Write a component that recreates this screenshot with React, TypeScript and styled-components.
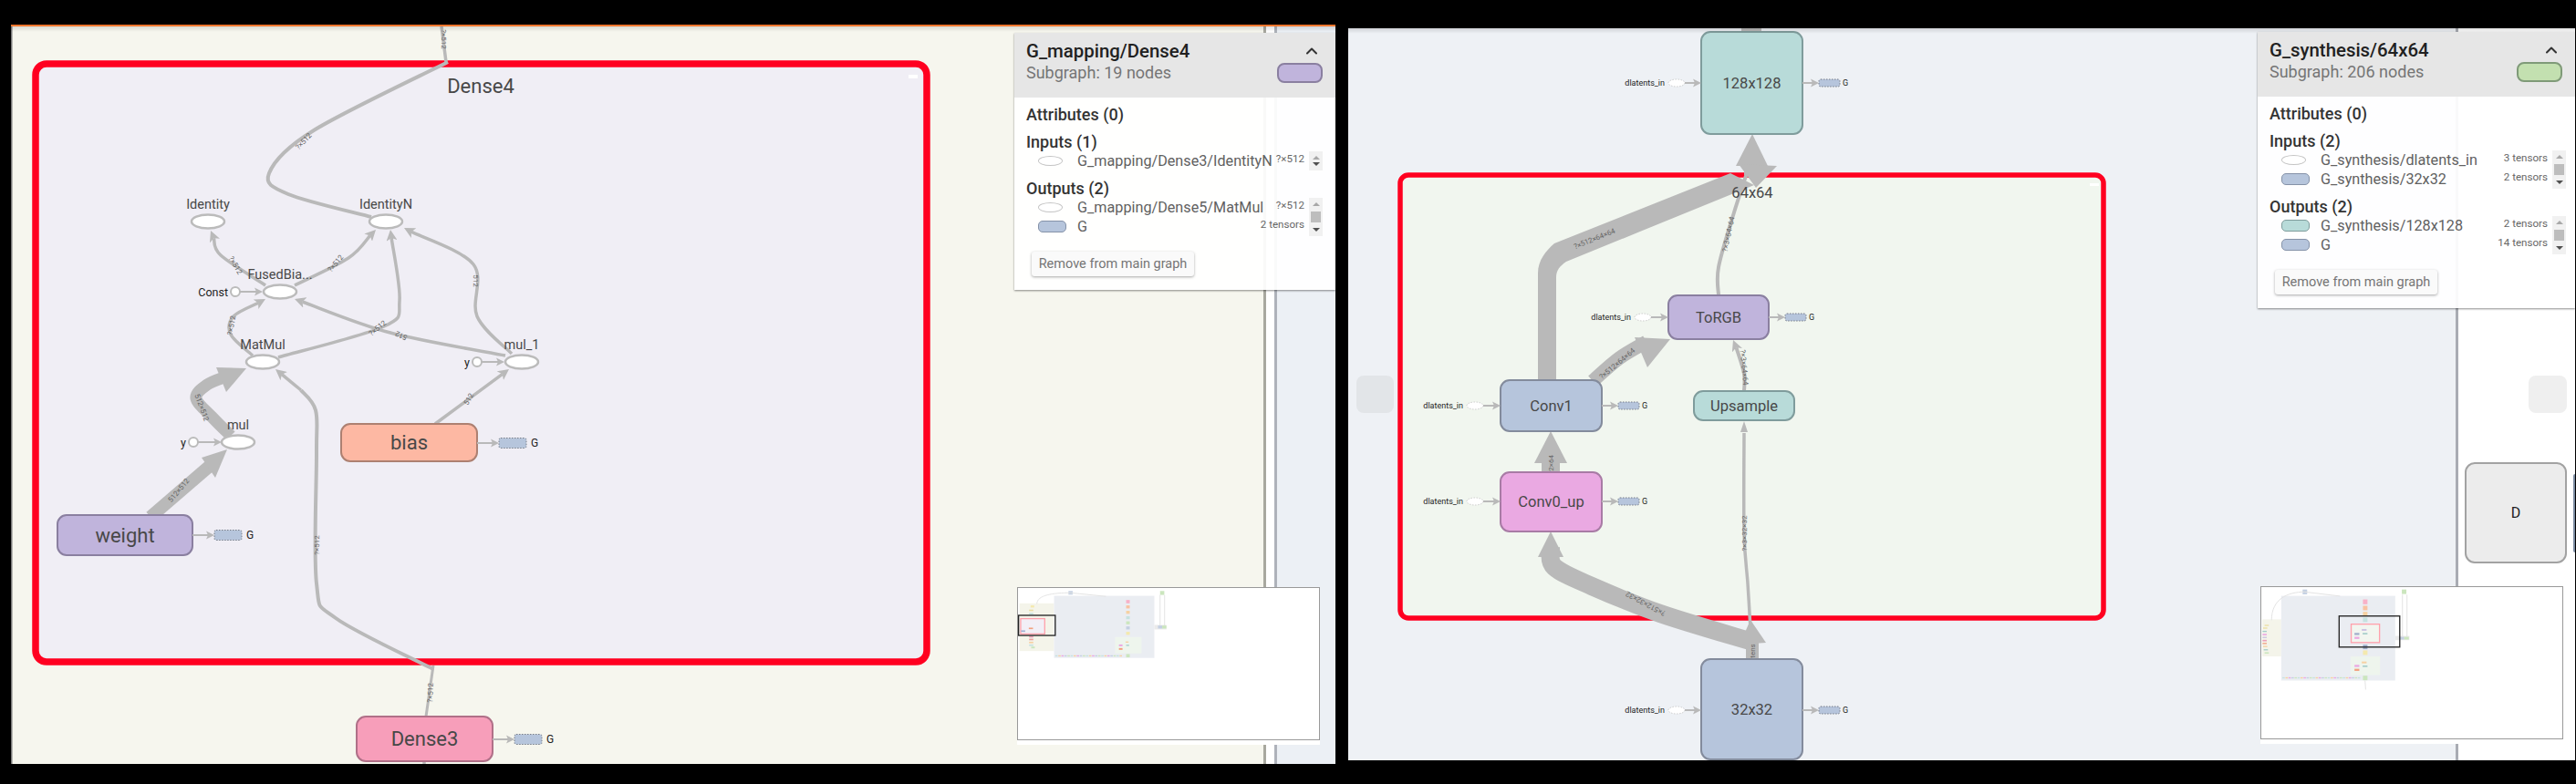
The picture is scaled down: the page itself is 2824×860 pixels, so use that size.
import * as React from "react";
import styled, { createGlobalStyle } from "styled-components";
import { ChevronUp } from "lucide-react";

const GlobalStyle = createGlobalStyle`
  html, body {
    margin: 0;
    width: 2824px;
    height: 860px;
    overflow: hidden;
    background: #000;
    font-family: Roboto, "Liberation Sans", sans-serif;
  }
`;

const Page = styled.div`
  display: flex;
  align-items: flex-start;
  gap: 14px;
  height: 860px;
  padding-left: 12px;
  box-sizing: border-box;
`;

const Panel = styled.section<{ $top: number; $width: number; $height: number; $accent?: string }>`
  position: relative;
  overflow: hidden;
  flex: none;
  margin-top: ${p => p.$top}px;
  width: ${p => p.$width}px;
  height: ${p => p.$height}px;

  &::after {
    content: "";
    position: absolute;
    left: 0;
    right: 0;
    top: 0;
    height: 6px;
    border-top: ${p => (p.$accent ? `2px solid ${p.$accent}` : "none")};
    background: linear-gradient(rgba(0, 0, 0, 0.12), rgba(0, 0, 0, 0));
  }
`;

const Graph = styled.svg`
  position: absolute;
  inset: 0;
  display: block;
  font-family: Roboto, "Liberation Sans", sans-serif;
`;

const Edge = styled.path<{ $width?: number }>`
  fill: none;
  stroke: #b9b9b9;
  stroke-width: ${p => p.$width ?? 3.5}px;
`;

const Band = styled.path`
  fill: #b9b9b9;
`;

const Head = styled.polygon`
  fill: #b9b9b9;
`;

const EdgeLabel = styled.text`
  font-size: 8px;
  fill: #666;
  text-anchor: middle;
  dominant-baseline: central;
`;

const GroupBox = styled.rect<{ $fill: string; $border: number }>`
  fill: ${p => p.$fill};
  stroke: #ff0020;
  stroke-width: ${p => p.$border}px;
`;

const Meta = styled.rect<{ $fill: string; $stroke: string }>`
  fill: ${p => p.$fill};
  stroke: ${p => p.$stroke};
  stroke-width: 2px;
`;

const Op = styled.ellipse`
  fill: #fff;
  stroke: #bbb;
  stroke-width: 2.5px;
`;

const AuxOval = styled.ellipse<{ $dashed?: boolean }>`
  fill: #fff;
  stroke: ${p => (p.$dashed ? "#ccc" : "#bbb")};
  stroke-width: ${p => (p.$dashed ? 1 : 2)}px;
  stroke-dasharray: ${p => (p.$dashed ? "1.5 1.5" : "none")};
`;

const AuxBox = styled.rect`
  fill: #b6c5dc;
  stroke: #777d88;
  stroke-width: 1px;
  stroke-dasharray: 1.5 1.5;
`;

const Label = styled.text<{ $size: number; $end?: boolean; $dark?: boolean }>`
  font-size: ${p => p.$size}px;
  fill: ${p => (p.$dark ? "#222" : "#484848")};
  text-anchor: ${p => (p.$end ? "end" : "middle")};
  dominant-baseline: central;
`;

const Card = styled.aside<{ $top: number; $width: number }>`
  position: absolute;
  z-index: 2;
  top: ${p => p.$top}px;
  right: 0;
  width: ${p => p.$width}px;
  background: rgba(255, 255, 255, 0.93);
  box-shadow: 0 1px 2px rgba(0, 0, 0, 0.45);
`;

const CardHeader = styled.header`
  display: flex;
  justify-content: space-between;
  height: 71px;
  padding: 8px 14px 0 13px;
  box-sizing: border-box;
  background: rgba(229, 229, 229, 0.97);
`;

const Titles = styled.div`
  display: flex;
  flex-direction: column;
  gap: 2px;
`;

const Title = styled.div`
  font-size: 20.4px;
  line-height: 24px;
  font-weight: 500;
  color: #212121;
  white-space: nowrap;
`;

const Subtitle = styled.div`
  font-size: 18px;
  line-height: 20px;
  color: #757575;
  white-space: nowrap;
`;

const HeaderSide = styled.div`
  display: flex;
  flex-direction: column;
  align-items: flex-end;
  margin-top: 2px;
`;

const Chevron = styled(ChevronUp)`
  display: block;
  margin-right: 2px;
  color: #333;
`;

const Swatch = styled.div<{ $fill: string; $stroke: string }>`
  width: 50px;
  height: 22px;
  margin-top: 3px;
  box-sizing: border-box;
  border-radius: 8px;
  background: ${p => p.$fill};
  border: 2px solid ${p => p.$stroke};
`;

const CardBody = styled.div<{ $right: number }>`
  padding: 9px ${p => p.$right}px 15px 13px;
`;

const SectionTitle = styled.div`
  font-size: 18px;
  line-height: 20px;
  font-weight: 500;
  color: #333;
  margin-bottom: 10px;
`;

const ListTitle = styled(SectionTitle)`
  margin-bottom: 0;
`;

const NodeList = styled.div`
  display: flex;
  margin-bottom: 10px;
`;

const Rows = styled.div`
  flex: 1;
  min-width: 0;
`;

const Row = styled.div`
  display: flex;
  align-items: center;
  height: 21px;
  padding-left: 13px;
`;

const RowShape = styled.div`
  flex: none;
  width: 43px;
`;

const Oval = styled.div`
  width: 27px;
  height: 11px;
  box-sizing: border-box;
  border: 1.5px solid #c4c4c4;
  border-radius: 50%;
  background: #fff;
`;

const Pill = styled.div<{ $fill: string; $stroke: string }>`
  width: 31px;
  height: 13px;
  box-sizing: border-box;
  border: 1.5px solid ${p => p.$stroke};
  border-radius: 5px;
  background: ${p => p.$fill};
`;

const RowName = styled.div`
  flex: 1;
  font-size: 16.2px;
  color: #616161;
  white-space: nowrap;
`;

const RowTensors = styled.div`
  flex: none;
  margin-top: -5px;
  font-size: 11.6px;
  color: #666;
  white-space: nowrap;
`;

const ScrollBar = styled.div`
  flex: none;
  display: flex;
  flex-direction: column;
  align-items: center;
  justify-content: space-between;
  width: 15px;
  margin-left: 5px;
  padding: 5px 0;
  box-sizing: border-box;
  background: #f1f1f1;
`;

const ScrollArrow = styled.div<{ $up?: boolean }>`
  width: 0;
  height: 0;
  border-left: 4px solid transparent;
  border-right: 4px solid transparent;
  ${p => (p.$up ? "border-bottom: 4px solid #a8a8a8;" : "border-top: 4px solid #505050;")}
`;

const ScrollThumb = styled.div`
  width: 11px;
  height: 12px;
  background: #bdbdbd;
`;

const RemoveButton = styled.button`
  display: block;
  width: 178px;
  height: 27px;
  margin: 17px 0 0 6px;
  padding: 0;
  border: none;
  border-radius: 3px;
  background: #fafafa;
  box-shadow: 0 1px 3px rgba(0, 0, 0, 0.35);
  font-family: inherit;
  font-size: 14.5px;
  color: #757575;
`;

const MiniFrame = styled.div<{ $right: number; $bottom: number }>`
  position: absolute;
  z-index: 2;
  right: ${p => p.$right}px;
  bottom: ${p => p.$bottom}px;
  width: 332px;
  padding-bottom: 5px;
  background: #fff;
`;

const MiniCanvas = styled.svg`
  display: block;
  width: 332px;
  height: 168px;
  box-sizing: border-box;
  border: 1.5px solid #999;
`;

const MiniViewport = styled.rect`
  fill: none;
  stroke: #222;
  stroke-width: 4px;
`;

const MiniWire = styled.path`
  fill: none;
  stroke: #dcdcdc;
  stroke-width: 3px;
`;

const arrows = (
  <defs>
    <marker id="big" markerUnits="userSpaceOnUse" markerWidth="14" markerHeight="12" refX="3" refY="6" orient="auto">
      <path d="M0 0L12 6L0 12L3 6Z" fill="#b9b9b9" />
    </marker>
    <marker id="small" markerUnits="userSpaceOnUse" markerWidth="10" markerHeight="10" refX="2" refY="5" orient="auto">
      <path d="M0 0.5L9 5L0 9.5L2 5Z" fill="#b9b9b9" />
    </marker>
  </defs>
);

// smooth line through measured points, last one pulled back so the marker tip lands on it
function curve(points: number[][], trim = 0) {
  const pts = points.map(p => [...p]);
  if (trim) {
    const a = pts[pts.length - 2];
    const b = pts[pts.length - 1];
    const len = Math.hypot(b[0] - a[0], b[1] - a[1]);
    b[0] -= ((b[0] - a[0]) / len) * trim;
    b[1] -= ((b[1] - a[1]) / len) * trim;
  }
  let d = `M${pts[0][0]} ${pts[0][1]}`;
  for (let i = 0; i < pts.length - 1; i++) {
    const p0 = pts[Math.max(i - 1, 0)];
    const p1 = pts[i];
    const p2 = pts[i + 1];
    const p3 = pts[Math.min(i + 2, pts.length - 1)];
    d += `C${p1[0] + (p2[0] - p0[0]) / 6} ${p1[1] + (p2[1] - p0[1]) / 6} ${p2[0] - (p3[0] - p1[0]) / 6} ${p2[1] - (p3[1] - p1[1]) / 6} ${p2[0]} ${p2[1]}`;
  }
  return d;
}

const ThinEdge = ({ points, width, plain }: { points: number[][]; width?: number; plain?: boolean }) => (
  <Edge d={curve(points, plain ? 0 : 9)} $width={width} markerEnd={plain ? undefined : "url(#big)"} />
);

const ThickEdge = ({ points, width, head }: { points: number[][]; width: number; head?: string }) => (
  <>
    <Edge d={curve(points)} $width={width} />
    {head && <Head points={head} />}
  </>
);

const TextOn = ({ x, y, r, children }: { x: number; y: number; r: number; children: string }) => (
  <EdgeLabel x={x} y={y} transform={`rotate(${r} ${x} ${y})`}>
    {children}
  </EdgeLabel>
);

interface MetaProps {
  x: number;
  y: number;
  w: number;
  h: number;
  fill: string;
  stroke: string;
  text: string;
  size: number;
  r?: number;
}

const MetaNode = ({ x, y, w, h, fill, stroke, text, size, r = 10 }: MetaProps) => (
  <>
    <Meta x={x} y={y} width={w} height={h} rx={r} $fill={fill} $stroke={stroke} />
    <Label x={x + w / 2} y={y + h / 2} $size={size}>
      {text}
    </Label>
  </>
);

const OpNode = ({ x, y, text }: { x: number; y: number; text: string }) => (
  <>
    <Op cx={x} cy={y} rx={18} ry={7.5} />
    <Label x={x} y={y - 19} $size={14.5}>
      {text}
    </Label>
  </>
);

const ConstIn = ({ x, y, to, text }: { x: number; y: number; to: number; text: string }) => (
  <>
    <Label x={x - 8} y={y} $size={12.5} $end $dark>
      {text}
    </Label>
    <AuxOval cx={x} cy={y} rx={5} ry={5} />
    <Edge d={`M${x + 5} ${y}H${to - 7}`} $width={2} markerEnd="url(#small)" />
  </>
);

const LatentIn = ({ x, y, to }: { x: number; y: number; to: number }) => (
  <>
    <Label x={x - 13} y={y} $size={9} $end $dark>
      dlatents_in
    </Label>
    <AuxOval cx={x} cy={y} rx={9} ry={4} $dashed />
    <Edge d={`M${x + 9} ${y}H${to - 7}`} $width={2} markerEnd="url(#small)" />
  </>
);

const GOut = ({ from, y, w, h, size }: { from: number; y: number; w: number; h: number; size: number }) => {
  const boxX = from + (w > 25 ? 24 : 18);
  return (
    <>
      <Edge d={`M${from} ${y}H${boxX - 7}`} $width={2} markerEnd="url(#small)" />
      <AuxBox x={boxX} y={y - h / 2} width={w} height={h} rx={2} />
      <Label x={boxX + w + (w > 25 ? 9 : 6)} y={y} $size={size} $dark>
        G
      </Label>
    </>
  );
};

const LeftGraph = () => (
  <Graph width={1452} height={811} viewBox="12 27 1452 811">
    {arrows}
    <rect x={12} y={27} width={1373} height={811} fill="#f6f6ee" />
    <rect x={12} y={27} width={1.5} height={811} fill="#777" />
    <rect x={1385} y={27} width={3} height={811} fill="#a8a89f" />
    <rect x={1388} y={27} width={9} height={811} fill="#fff" />
    <rect x={1397} y={27} width={3} height={811} fill="#aeb2ba" />
    <rect x={1400} y={27} width={64} height={811} fill="#ecf0f5" />

    <GroupBox x={39} y={70} width={977} height={656} rx={12} $fill="#f0eef5" $border={7.5} />
    <rect x={996} y={82} width={10} height={4} fill="#fff" />

    <ThinEdge plain points={[[484, 29], [489, 68]]} />
    <ThinEdge plain width={4} points={[[491, 68], [344, 143], [295, 190], [316, 213], [407, 238]]} />
    <ThinEdge points={[[291, 313], [242, 280], [231, 253]]} />
    <ThinEdge points={[[323, 313], [382, 283], [412, 252]]} />
    <ThinEdge points={[[277, 390], [253, 367], [256, 347], [291, 328]]} />
    <ThinEdge points={[[305, 392], [421, 358], [438, 330], [428, 252]]} />
    <ThinEdge points={[[554, 390], [428, 365], [323, 328]]} />
    <ThinEdge points={[[561, 388], [523, 347], [519, 290], [443, 250]]} />
    <ThinEdge points={[[477, 465], [558, 405]]} />
    <ThinEdge plain width={3} points={[[467, 786], [475, 730]]} />
    <ThinEdge plain width={4} points={[[475, 734], [368, 678], [347, 640], [347, 497], [346, 450], [330, 428]]} />
    <Edge d={curve([[330, 428], [302, 405]], 9)} markerEnd="url(#big)" />
    <Edge d="M465 835V838" />

    <ThickEdge width={14} points={[[165, 567], [230, 511]]} head="249,493 221,502 236,524" />
    <ThickEdge
      width={13}
      points={[[253, 478], [233, 458], [215, 437], [227, 422], [248, 413]]}
      head="270,404 237,403 248,430"
    />

    <Label x={527} y={94} $size={22}>
      Dense4
    </Label>
    <TextOn x={333} y={155} r={-47}>?×512</TextOn>
    <TextOn x={486} y={43} r={90}>?×512</TextOn>
    <TextOn x={258} y={291} r={60}>?×512</TextOn>
    <TextOn x={368} y={289} r={-50}>?×512</TextOn>
    <TextOn x={254} y={357} r={-80}>?×512</TextOn>
    <TextOn x={414} y={360} r={-40}>?×512</TextOn>
    <TextOn x={440} y={368} r={205}>512</TextOn>
    <TextOn x={521} y={308} r={90}>512</TextOn>
    <TextOn x={514} y={438} r={-60}>512</TextOn>
    <TextOn x={196} y={538} r={-50}>512×512</TextOn>
    <TextOn x={221} y={447} r={70}>512×512</TextOn>
    <TextOn x={347} y={598} r={-90}>?×512</TextOn>
    <TextOn x={472} y={760} r={-88}>?×512</TextOn>

    <OpNode x={228} y={243} text="Identity" />
    <OpNode x={423} y={243} text="IdentityN" />
    <OpNode x={307} y={320} text="FusedBia..." />
    <OpNode x={288} y={397} text="MatMul" />
    <OpNode x={572} y={397} text="mul_1" />
    <OpNode x={261} y={485} text="mul" />
    <ConstIn x={258} y={320} to={288} text="Const" />
    <ConstIn x={523} y={397} to={553} text="y" />
    <ConstIn x={212} y={485} to={243} text="y" />

    <MetaNode x={374} y={465} w={149} h={41} fill="#fdb8a3" stroke="#ad8071" text="bias" size={22} />
    <MetaNode x={63} y={565} w={148} h={44} fill="#c0b4dc" stroke="#8a7fa0" text="weight" size={22} />
    <MetaNode x={391} y={786} w={149} h={49} fill="#f79eba" stroke="#b07088" text="Dense3" size={22} />
    <GOut from={523} y={486} w={30} h={11} size={12} />
    <GOut from={211} y={587} w={30} h={11} size={12} />
    <GOut from={540} y={811} w={30} h={11} size={12} />
  </Graph>
);

const RightGraph = () => (
  <Graph width={1345} height={803} viewBox="1478 31 1345 803">
    {arrows}
    <rect x={1478} y={31} width={1215} height={803} fill="#eef1f5" />
    <rect x={2692} y={31} width={3} height={803} fill="#a9acb3" />
    <rect x={2695} y={31} width={128} height={803} fill="#fff" />
    <rect x={1487} y={412} width={41} height={41} rx={8} fill="#e2e5e8" />
    <rect x={2772} y={412} width={42} height={41} rx={8} fill="#efefef" />
    <rect x={2703} y={508} width={110} height={109} rx={10} fill="#ececec" stroke="#a2a2a2" strokeWidth={2} />
    <Label x={2758} y={562} $size={16} $dark>
      D
    </Label>
    <rect x={2821} y={520} width={4} height={86} rx={2} fill="#7a8aa0" />

    <GroupBox x={1535} y={192} width={771} height={486} rx={9} $fill="#f1f6ef" $border={5.5} />
    <rect x={2291} y={201} width={10} height={3} fill="#fff" />

    <rect x={1909} y={31} width={22} height={4} fill="#b9b9b9" />

    <ThinEdge plain width={4} points={[[1884, 324], [1884, 293], [1901, 233], [1920, 175]]} />
    <Head points="1921,147 1903,182 1938,182" />
    <rect x={1912} y={170} width={18} height={22} fill="#b9b9b9" />
    {/* this one widens on its sloped run, so it is an outline and not a stroke */}
    <Band d="M1686 418L1686 300C1686 285 1695 275 1704 267L1897 190L1923 203L1717 287C1710 292 1706 296 1706 305L1706 418Z" />
    <Head points="1948,182 1906,180 1925,206" />
    <ThickEdge width={15} points={[[1746, 418], [1775, 393], [1805, 375]]} head="1831,372 1792,370 1806,403" />
    <ThickEdge width={20} points={[[1700, 518], [1700, 500]]} head="1700,473 1682,508 1718,508" />

    <ThickEdge
      width={20}
      points={[[1921, 704], [1820, 673], [1745, 643], [1704, 622], [1700, 602]]}
      head="1700,583 1686,611 1714,611"
    />
    <ThickEdge width={14} points={[[1921, 723], [1921, 700]]} head="1919,680 1907,707 1936,705" />
    <ThinEdge plain width={3.5} points={[[1919, 690], [1916, 640], [1912, 585], [1912, 475]]} />
    <Head points="1912,462 1908,474 1916,474" />
    <ThinEdge width={4} points={[[1912, 429], [1912, 410], [1904, 383], [1900, 373]]} />

    <Label x={1921} y={211} $size={16.5}>
      64x64
    </Label>
    <TextOn x={1748} y={262} r={-22}>?×512×64×64</TextOn>
    <TextOn x={1895} y={257} r={-78}>?×3×64×64</TextOn>
    <TextOn x={1773} y={399} r={-40}>?×512×64×64</TextOn>
    <TextOn x={1912} y={403} r={85}>?×3×64×64</TextOn>
    <TextOn x={1700} y={510} r={-90}>12×64</TextOn>
    <TextOn x={1912} y={585} r={-90}>?×3×32×32</TextOn>
    <TextOn x={1804} y={662} r={208}>?×512×32×32</TextOn>
    <TextOn x={1921} y={714} r={-90}>tens</TextOn>

    <MetaNode x={1865} y={35} w={111} h={112} fill="#b8dbd9" stroke="#7f9c9c" text="128x128" size={16.5} />
    <MetaNode x={1829} y={324} w={110} h={48} fill="#c0b4dc" stroke="#8a7fa0" text="ToRGB" size={16.5} />
    <MetaNode x={1645} y={417} w={111} h={56} fill="#b6c5dc" stroke="#838b9c" text="Conv1" size={16.5} />
    <MetaNode x={1857} y={429} w={110} h={32} fill="#b8dbd9" stroke="#7f9c9c" text="Upsample" size={16.5} />
    <MetaNode x={1645} y={518} w={111} h={65} fill="#eaa9e2" stroke="#a87ba5" text="Conv0_up" size={16.5} />
    <MetaNode x={1865} y={723} w={111} h={110} fill="#b6c5dc" stroke="#838b9c" text="32x32" size={16.5} />

    <LatentIn x={1838} y={91} to={1865} />
    <LatentIn x={1801} y={348} to={1829} />
    <LatentIn x={1617} y={445} to={1645} />
    <LatentIn x={1617} y={550} to={1645} />
    <LatentIn x={1838} y={779} to={1865} />
    <GOut from={1976} y={91} w={23} h={8} size={9} />
    <GOut from={1939} y={348} w={23} h={8} size={9} />
    <GOut from={1756} y={445} w={23} h={8} size={9} />
    <GOut from={1756} y={550} w={23} h={8} size={9} />
    <GOut from={1976} y={779} w={23} h={8} size={9} />
  </Graph>
);

type Mini = [number, number, number, number, string];

const LeftMini = () => (
  <MiniCanvas viewBox="105 72 996 504">
    <g filter="url(#miniBlur)" opacity={0.8}>
      <filter id="miniBlur">
        <feGaussianBlur stdDeviation="2" />
      </filter>
      {(
        [
          [107, 123, 115, 159, "#f2f2e6"],
          [222, 98, 334, 207, "#e6e9f0"],
          [425, 235, 88, 55, "#eaf3e9"],
          [556, 195, 40, 15, "#e6e6e6"],
          [109, 172, 84, 55, "#ff8a98"],
          [113, 176, 76, 47, "#efecf5"],
          [462, 112, 12, 11, "#f79eba"],
          [462, 130, 12, 10, "#f8b48a"],
          [462, 148, 12, 10, "#f5c68c"],
          [462, 166, 12, 10, "#b8dbd9"],
          [462, 183, 12, 10, "#bfe0ae"],
          [462, 200, 12, 10, "#b6c5dc"],
          [462, 218, 12, 10, "#f2e49a"],
          [462, 292, 12, 11, "#bfe0ae"],
          [270, 82, 14, 12, "#b6c5dc"],
          [575, 82, 14, 13, "#bfe0ae"],
          [568, 197, 14, 10, "#b6c5dc"],
          [582, 197, 14, 10, "#bfe0ae"],
          [144, 130, 12, 7, "#f2e49a"],
          [139, 144, 14, 5, "#e6d78a"],
          [139, 155, 14, 5, "#b8dbd9"],
          [139, 232, 14, 5, "#e88aa8"],
          [139, 241, 14, 5, "#e88a8a"],
          [139, 251, 14, 5, "#f5c68c"],
          [139, 260, 14, 5, "#b8dbd9"],
          [146, 267, 12, 6, "#bfe0ae"],
          [138, 204, 14, 5, "#f08a60"],
          [112, 213, 14, 5, "#8a9cc8"],
          [438, 260, 12, 6, "#e794dc"],
          [438, 272, 12, 6, "#f08a60"],
          [460, 250, 10, 4, "#f5c68c"],
          [462, 261, 10, 4, "#8ec0bc"],
        ] as Mini[]
      ).map(([x, y, w, h, fill]) => (
        <rect key={`${x}-${y}`} x={x} y={y} width={w} height={h} fill={fill} />
      ))}
      {Array.from({ length: 22 }, (_, i) => (
        <rect key={i} x={226 + i * 10.2} y={296} width={8} height={4} fill={["#b8dbd9", "#f5c68c", "#e794dc", "#b6c5dc", "#bfe0ae"][i % 5]} />
      ))}
      <MiniWire d="M165 125C165 95 220 88 277 88L395 100" />
      <MiniWire d="M575 95V197M590 95V197" />
    </g>
    <MiniViewport x={104} y={163} width={122} height={67} />
  </MiniCanvas>
);

const RightMini = () => (
  <MiniCanvas viewBox="115 730 996 502">
    <g filter="url(#miniBlur2)" opacity={0.8}>
      <filter id="miniBlur2">
        <feGaussianBlur stdDeviation="2" />
      </filter>
      {(
        [
          [117, 837, 63, 123, "#f2f2e6"],
          [180, 759, 378, 281, "#e6e9f0"],
          [410, 960, 98, 62, "#eaf3e9"],
          [558, 892, 47, 14, "#e6e6e6"],
          [410, 851, 98, 65, "#ff8a98"],
          [414, 855, 90, 57, "#eff5ed"],
          [451, 771, 15, 16, "#f79eba"],
          [451, 792, 15, 15, "#f8b48a"],
          [451, 812, 15, 14, "#f5c68c"],
          [451, 831, 15, 15, "#b8dbd9"],
          [451, 921, 15, 15, "#8a9cc0"],
          [451, 940, 15, 15, "#f2e49a"],
          [451, 1024, 15, 15, "#bfe0ae"],
          [251, 738, 15, 16, "#b6c5dc"],
          [580, 738, 15, 15, "#bfe0ae"],
          [573, 895, 15, 9, "#b6c5dc"],
          [588, 895, 15, 9, "#bfe0ae"],
          [447, 869, 16, 6, "#c0b4dc"],
          [450, 882, 16, 5, "#8ec0bc"],
          [423, 882, 16, 7, "#8a9cc0"],
          [423, 895, 16, 7, "#e794dc"],
          [447, 977, 16, 6, "#f5c68c"],
          [450, 990, 16, 5, "#8ec0bc"],
          [423, 988, 16, 7, "#e794dc"],
          [423, 1001, 16, 7, "#f08a60"],
          [125, 855, 14, 4, "#e6d78a"],
          [120, 864, 14, 4, "#e6d78a"],
          [118, 875, 14, 4, "#8ec0bc"],
          [118, 885, 14, 5, "#e794dc"],
          [118, 895, 14, 4, "#c0b4dc"],
          [118, 905, 14, 5, "#e88aa8"],
          [118, 915, 14, 4, "#f08a60"],
          [120, 925, 14, 4, "#f5c68c"],
          [122, 936, 14, 4, "#8ec0bc"],
          [125, 946, 14, 5, "#bfe0ae"],
        ] as Mini[]
      ).map(([x, y, w, h, fill]) => (
        <rect key={`${x}-${y}`} x={x} y={y} width={w} height={h} fill={fill} />
      ))}
      {Array.from({ length: 26 }, (_, i) => (
        <rect key={i} x={184 + i * 10} y={1029} width={8} height={4} fill={["#b8dbd9", "#f5c68c", "#e794dc", "#b6c5dc", "#bfe0ae"][i % 5]} />
      ))}
      <MiniWire d="M148 840C148 770 200 746 258 746L375 760" />
      <MiniWire d="M582 755V895M597 755V895M458 1040L460 1070" />
    </g>
    <MiniViewport x={372} y={826} width={201} height={103} />
  </MiniCanvas>
);

interface ListRow {
  name: string;
  shape: string;
  fill?: string;
  stroke?: string;
}

const NodeRows = ({ rows, thumb }: { rows: ListRow[]; thumb?: boolean }) => (
  <NodeList>
    <Rows>
      {rows.map(r => (
        <Row key={r.name}>
          <RowShape>{r.fill ? <Pill $fill={r.fill} $stroke={r.stroke ?? "#888"} /> : <Oval />}</RowShape>
          <RowName>{r.name}</RowName>
          <RowTensors>{r.shape}</RowTensors>
        </Row>
      ))}
    </Rows>
    <ScrollBar>
      <ScrollArrow $up />
      {thumb && <ScrollThumb />}
      <ScrollArrow />
    </ScrollBar>
  </NodeList>
);

interface InfoProps {
  top: number;
  width: number;
  right: number;
  title: string;
  subtitle: string;
  fill: string;
  stroke: string;
  inputs: ListRow[];
  outputs: ListRow[];
  inputThumb?: boolean;
}

const InfoCard = ({ top, width, right, title, subtitle, fill, stroke, inputs, outputs, inputThumb }: InfoProps) => (
  <Card $top={top} $width={width}>
    <CardHeader>
      <Titles>
        <Title>{title}</Title>
        <Subtitle>{subtitle}</Subtitle>
      </Titles>
      <HeaderSide>
        <Chevron size={20} strokeWidth={2.4} />
        <Swatch $fill={fill} $stroke={stroke} />
      </HeaderSide>
    </CardHeader>
    <CardBody $right={right}>
      <SectionTitle>Attributes (0)</SectionTitle>
      <ListTitle>Inputs ({inputs.length})</ListTitle>
      <NodeRows rows={inputs} thumb={inputThumb} />
      <ListTitle>Outputs ({outputs.length})</ListTitle>
      <NodeRows rows={outputs} thumb />
      <RemoveButton>Remove from main graph</RemoveButton>
    </CardBody>
  </Card>
);

const BLUE = { fill: "#b6c5dc", stroke: "#8592a8" };

export default function App() {
  return (
    <>
      <GlobalStyle />
      <Page>
        <Panel $top={27} $width={1452} $height={811} $accent="#f4772e">
          <LeftGraph />
          <InfoCard
            top={9}
            width={352}
            right={14}
            title="G_mapping/Dense4"
            subtitle="Subgraph: 19 nodes"
            fill="#c0b4dc"
            stroke="#8a7fa0"
            inputs={[{ name: "G_mapping/Dense3/IdentityN", shape: "?×512" }]}
            outputs={[
              { name: "G_mapping/Dense5/MatMul", shape: "?×512" },
              { name: "G", shape: "2 tensors", ...BLUE },
            ]}
          />
          <MiniFrame $right={17} $bottom={21}>
            <LeftMini />
          </MiniFrame>
        </Panel>
        <Panel $top={31} $width={1345} $height={803}>
          <RightGraph />
          <InfoCard
            top={4}
            width={348}
            right={10}
            title="G_synthesis/64x64"
            subtitle="Subgraph: 206 nodes"
            fill="#c3e0b0"
            stroke="#7f9a78"
            inputThumb
            inputs={[
              { name: "G_synthesis/dlatents_in", shape: "3 tensors" },
              { name: "G_synthesis/32x32", shape: "2 tensors", ...BLUE },
            ]}
            outputs={[
              { name: "G_synthesis/128x128", shape: "2 tensors", fill: "#b8dbd9", stroke: "#7f9c9c" },
              { name: "G", shape: "14 tensors", ...BLUE },
            ]}
          />
          <MiniFrame $right={13} $bottom={18}>
            <RightMini />
          </MiniFrame>
        </Panel>
      </Page>
    </>
  );
}
